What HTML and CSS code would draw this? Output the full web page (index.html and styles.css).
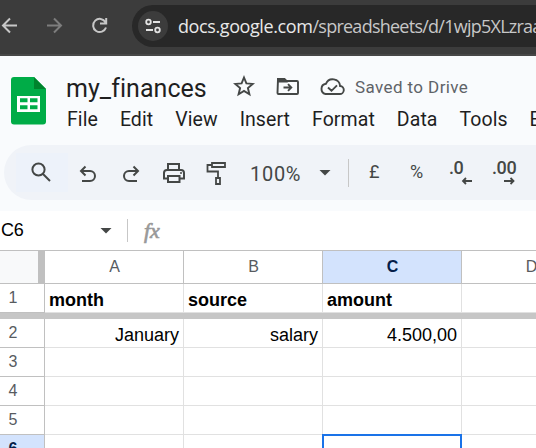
FILE: index.html
```html
<!DOCTYPE html>
<html lang="en">
<head>
<meta charset="utf-8">
<title>my_finances</title>
<link rel="stylesheet" href="styles.css">
</head>
<body>
<div class="browser">
  <svg class="nav" width="132" height="54" viewBox="0 0 132 54" fill="none" stroke-width="2">
    <path d="M17 25.500H3M10 18.500l-7 7 7 7" stroke="#c7c7c7"/>
    <path d="M47 25.500h14M54 18.500l7 7-7 7" stroke="#7d7d7d"/>
    <path d="M105.500 22.200A6.600 6.600 0 1 0 106 27.500M106.200 18v5.500H100" stroke="#c7c7c7"/>
  </svg>
  <div class="address">
    <div class="site">
      <svg width="30" height="30" viewBox="0 0 30 30" fill="none" stroke="#e3e3e3" stroke-width="1.8"><circle cx="10.500" cy="11" r="2.300"/><path d="M15 11h7M8 19h7"/><circle cx="19.500" cy="19" r="2.300"/></svg>
    </div>
    <div class="url"><span class="domain">docs.google.com</span><span class="path">/spreadsheets/d/1wjp5XLzraa</span></div>
  </div>
</div>
<header class="docs">
  <svg class="logo" width="36" height="48" viewBox="0 0 36 48"><path d="M3 0h20l12 12v32.500a3 3 0 0 1-3 3H3a3 3 0 0 1-3-3V3a3 3 0 0 1 3-3Z" fill="#00ac47"/><path d="M23 0v12h12Z" fill="#00832d"/><path fill-rule="evenodd" fill="#fff" d="M6 19h23v16H6ZM9 21.300h7.500v4H9Zm10 0h7.500v4H19ZM9 28.300h7.500v4H9Zm10 0h7.500v4H19Z"/></svg>
  <div class="doc-info">
    <div class="title-row">
      <h1>my_finances</h1>
      <svg class="title-icons" width="116" height="26" viewBox="0 0 116 26" fill="none" stroke="#444746" stroke-width="1.900">
        <path d="m11 3.500 2.400 5.900 6.300.5-4.800 4.200 1.500 6.100-5.400-3.300-5.400 3.300 1.500-6.100-4.800-4.200 6.300-.5Z"/>
        <path d="M45 5h6.500l2 2H64a1 1 0 0 1 1 1v11a1 1 0 0 1-1 1H45.500a1 1 0 0 1-1-1Z"/><path d="M45 5h6l2 2.500h-8Z" fill="#444746"/><path d="M50.500 13.500H58M55 10.200l3.300 3.300-3.300 3.300"/>
        <path d="M92.500 20h14a4 4 0 0 0 .6-8 7.400 7.400 0 0 0-14.200-2.200 5.200 5.200 0 0 0-.4 10.200ZM95 13.500l3.500 3.300 5.500-5.500"/>
      </svg>
      <span class="saved">Saved to Drive</span>
    </div>
    <nav class="menu"><span>File</span><span>Edit</span><span>View</span><span>Insert</span><span>Format</span><span>Data</span><span>Tools</span><span>Extensions</span></nav>
  </div>
</header>
<div class="toolbar-wrap">
  <div class="toolbar">
    <div class="search"><svg width="52" height="39" viewBox="0 0 52 39" fill="none" stroke="#444746" stroke-width="2"><circle cx="22.500" cy="16.500" r="6.100"/><path d="m27 21 7 7"/></svg></div>
    <svg width="160" height="55" viewBox="68 145 160 55" fill="none" stroke="#444746" stroke-width="2">
      <path d="M82 181h8a5 5 0 0 0 0-10h-9M85.500 166.500 81 171l4.500 4.500"/>
      <path d="M137 181h-8a5 5 0 0 1 0-10h9M133.500 166.500 138 171l-4.500 4.500"/>
      <path d="M168 169v-5h11v5M168 178.500h-4V173a3 3 0 0 1 3-3h14a3 3 0 0 1 3 3v5.500h-4M168 176h11.500v6H168Z"/><path d="M180 173h2" stroke-width="1.500"/>
      <path d="M212 163h13v4h-13ZM212 165h-4.500v6.500H218v6M216 178h4v6h-4Z" stroke-width="1.800"/>
    </svg>
    <div class="zoom">100%</div>
    <i class="caret"></i>
    <i class="divider"></i>
    <span class="currency">£</span>
    <span class="percent">%</span>
    <div class="decimal less"><span>.0</span><svg width="12" height="8" viewBox="0 0 12 8"><path d="M11 4H2M5 1 2 4l3 3"/></svg></div>
    <div class="decimal more"><span>.00</span><svg width="12" height="8" viewBox="0 0 12 8"><path d="M0 4h10M6.500 1l3 3-3 3"/></svg></div>
  </div>
</div>
<div class="formula"><span class="ref">C6</span><i class="caret"></i><i class="divider"></i><span class="fx">fx</span></div>
<main class="sheet">
  <div class="row heads"><div class="num corner"></div><div class="cell">A</div><div class="cell">B</div><div class="cell active">C</div><div class="cell">D</div></div>
  <div class="row names"><div class="num">1</div><div class="cell">month</div><div class="cell">source</div><div class="cell">amount</div><div class="cell"></div></div>
  <div class="freeze"></div>
  <div class="row first"><div class="num">2</div><div class="cell">January</div><div class="cell">salary</div><div class="cell">4.500,00</div><div class="cell"></div></div>
  <div class="row"><div class="num">3</div><div class="cell"></div><div class="cell"></div><div class="cell"></div><div class="cell"></div></div>
  <div class="row"><div class="num">4</div><div class="cell"></div><div class="cell"></div><div class="cell"></div><div class="cell"></div></div>
  <div class="row"><div class="num">5</div><div class="cell"></div><div class="cell"></div><div class="cell"></div><div class="cell"></div></div>
  <div class="row"><div class="num active">6</div><div class="cell"></div><div class="cell"></div><div class="cell selected"></div><div class="cell"></div></div>
</main>
</body>
</html>
```
FILE: styles.css
```css
* { box-sizing: border-box; }
html { overflow: hidden; }
body { margin: 0; width: 536px; height: 448px; overflow: hidden; background: #fff; font-family: "Liberation Sans", Arial, sans-serif; }
svg { display: block; flex: none; }
.browser { height: 56px; display: flex; background: #3c3c3c; border-bottom: 2px solid #474747; overflow: hidden; }
.address { flex: none; width: 404px; height: 42px; margin-top: 5px; padding-left: 6px; display: flex; align-items: center; background: #282828; border-radius: 21px 0 0 21px; overflow: hidden; }
.site { flex: none; width: 30px; height: 30px; border-radius: 50%; background: #3c3c3c; }
.url { margin-left: 10px; font: 18px/26px "Open Sans", sans-serif; white-space: nowrap; color: #c7c7c7; }
.domain { color: #e8e8e8; letter-spacing: -.4px; }
.path { letter-spacing: -.75px; }
.docs { height: 89px; background: #f9fbfd; display: flex; padding: 21px 0 0 11px; overflow: hidden; }
.doc-info { margin-left: 19px; flex: none; }
.title-row { display: flex; height: 28px; margin-top: -3px; }
h1 { margin: 0; width: 167px; font: 400 25px/30px Roboto, sans-serif; color: #1f1f1f; letter-spacing: .05px; }
.saved { margin-left: 6px; font: 17px/26px Roboto, sans-serif; color: #5f6368; white-space: nowrap; letter-spacing: .4px; }
.menu { display: flex; gap: 22px; padding-left: 1px; font: 19.500px/36px Roboto, sans-serif; color: #1f1f1f; letter-spacing: .07px; }
.toolbar-wrap { height: 66px; padding-left: 4px; background: #f9fbfd; }
.toolbar { height: 55px; display: flex; align-items: center; background: #f0f3f8; border-radius: 28px 0 0 28px; padding-left: 12px; overflow: hidden; color: #444746; font-family: Roboto, sans-serif; }
.search { flex: none; width: 52px; height: 39px; background: #edf2fa; }
.zoom { flex: none; width: 69px; padding: 2px 0 0 22px; margin-right: 22px; font-size: 20px; letter-spacing: .7px; }
.caret { flex: none; width: 12px; height: 6px; background: #444746; clip-path: polygon(0 0, 100% 0, 50% 100%); }
.divider { flex: none; width: 1px; height: 28px; margin-left: 17px; background: #c7c7c7; }
.currency, .percent { flex: none; font-size: 18px; }
.currency { width: 41px; margin-left: 20px; margin-top: -2px; }
.percent { width: 39px; margin-top: -2px; }
.decimal { flex: none; width: 43px; height: 30px; font-size: 18px; font-weight: 500; line-height: 20px; padding-top: 0; letter-spacing: -.4px; }
.decimal svg { margin: -1px 0 0 12px; fill: none; stroke: #444746; stroke-width: 1.800; }
.formula { height: 39px; display: flex; align-items: center; background: #fff; }
.ref { width: 100px; padding-left: 1px; font-size: 18px; letter-spacing: -.3px; }
.formula .divider { height: 23px; margin: 0 0 0 15px; }
.fx { margin-left: 16px; font: italic 22px/30px "Liberation Serif", serif; -webkit-text-stroke: .7px #999; color: #999; }
.sheet { width: 536px; overflow: hidden; border-top: 1px solid #c0c0c0; }
.row { display: grid; grid-template-columns: 45px repeat(4, 139px); height: 29px; }
.cell { border-right: 1px solid #e1e1e1; border-bottom: 1px solid #e1e1e1; padding: 4px 4px 0 4px; font-size: 18px; line-height: 24px; }
.num { border-right: 1px solid #c0c0c0; border-bottom: 1px solid #c0c0c0; padding-right: 18px; text-align: center; font-size: 16px; line-height: 28px; color: #575b5f; }
.heads { height: 33px; }
.heads .cell { padding: 0 0 0 1px; border-color: #c0c0c0; text-align: center; font-size: 16px; line-height: 32px; color: #575b5f; }
.corner { background: #f8f9fa; border-right: 7px solid #c0c0c0; }
.row .active { background: #d3e3fd; color: #041e49; font-weight: 700; }
.names .cell { font-weight: 700; }
.freeze { height: 6px; background: #c6c6c6; }
.first .cell { text-align: right; }
.row .selected { margin: -1px 0 0 -1px; border: 2px solid #1a73e8; }
```
